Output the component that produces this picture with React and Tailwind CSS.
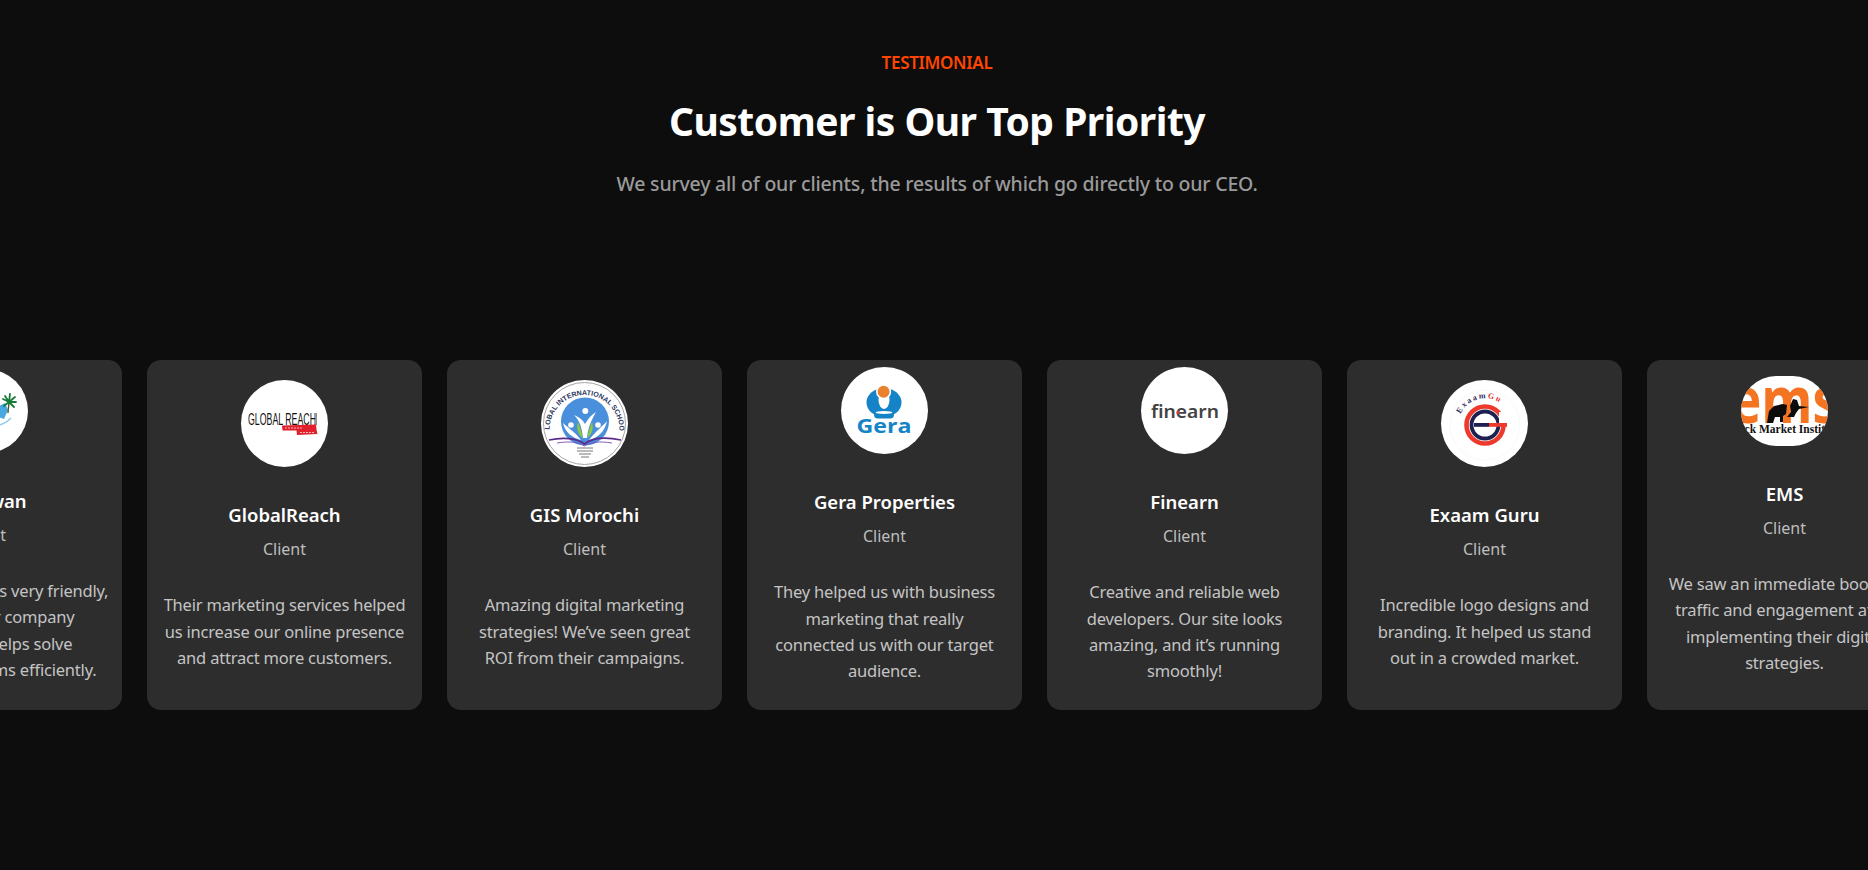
import React from 'react';

const GlobalReachLogo = () => (
  <svg viewBox="0 0 87 87" className="w-full h-full">
    <text x="7" y="45" fontFamily="Liberation Sans, sans-serif" fontSize="16" fill="#111" textLength="68" lengthAdjust="spacingAndGlyphs">GLOBAL REACH</text>
    <path d="M41 45.5 L75 44.5 L75.5 49.5 L76.5 54 L56 55 L55.5 50.5 L41.5 50.5 Z" fill="#e0202c" />
    <path d="M44 48 H62 M59 52.5 H73" stroke="#f6c9cc" strokeWidth="0.9" strokeDasharray="2 1" />
    <path d="M75.5 33 V45" stroke="#444" strokeWidth="0.6" />
  </svg>
);

const GisLogo = () => (
  <svg viewBox="0 0 87 87" className="w-full h-full">
    <circle cx="43.5" cy="43.5" r="41" fill="none" stroke="#9a9a9a" strokeWidth="0.9" />
    <defs>
      <path id="gis-arc" d="M8.5 50 A35 35 0 1 1 78.5 50" />
    </defs>
    <text fontFamily="Liberation Sans, sans-serif" fontSize="7" fontWeight="700" fill="#2a3560">
      <textPath href="#gis-arc" startOffset="50%" textAnchor="middle">GLOBAL INTERNATIONAL SCHOOL</textPath>
    </text>
    <circle cx="44" cy="41.5" r="24" fill="#4a8fdc" />
    <path d="M42 58 C41 48 39 41 33 35 C38 37 42 40 44 44 C47 39 50 35 55 32 C51 39 47 47 46 58 Z" fill="#fff" />
    <circle cx="44.3" cy="31" r="3" fill="#fff" />
    <circle cx="30" cy="45" r="2.8" fill="#fff" />
    <circle cx="57" cy="45" r="2.8" fill="#fff" />
    <path d="M22 43 C26 47 33 51 40 60 C31 58 24 52 22 43 Z M66 41 C62 46 55 51 48 60 C57 58 64 51 66 41 Z" fill="#fff" />
    <path d="M37 42 C39 47 41 52 41.5 58 C37 54 35 48 37 42 Z M51 42 C49 47 47 52 46.5 58 C51 54 53 48 51 42 Z" fill="#8cc63f" />
    <path d="M8 60 C22 57 36 58 43.5 64 C51 58 65 57 80 60" fill="none" stroke="#5b2a8c" strokeWidth="1.7" />
    <path d="M16 63 C28 61 38 62 43.5 66 C49 62 59 61 71 63" fill="none" stroke="#7a4bb0" strokeWidth="0.9" />
    <path d="M36 68 H52 M36 71 H52 M38 74 H50 M40 77 H48" stroke="#666" strokeWidth="0.9" />
  </svg>
);

const GeraLogo = () => (
  <svg viewBox="0 0 87 87" className="w-full h-full">
    <ellipse cx="43" cy="35.5" rx="17.5" ry="14.5" fill="#1583c7" />
    <ellipse cx="43" cy="33" rx="5.5" ry="9" fill="#fff" />
    <circle cx="42.6" cy="24.7" r="7.6" fill="#fff" />
    <circle cx="42.6" cy="24.7" r="6" fill="#e9822e" />
    <rect x="33" y="44" width="20" height="7.5" rx="3.7" fill="#1583c7" />
    <ellipse cx="43" cy="45.5" rx="8.5" ry="1.4" fill="#fff" />
    <text x="43" y="66" textAnchor="middle" fontFamily="Open Sans, sans-serif" fontWeight="700" fontSize="20" fill="#1583c7" textLength="55" lengthAdjust="spacingAndGlyphs">Gera</text>
  </svg>
);

const FinearnLogo = () => (
  <svg viewBox="0 0 87 87" className="w-full h-full">
    <text x="10" y="50.5" fontFamily="Noto Sans, sans-serif" fontWeight="600" fontSize="18" fill="#434345" textLength="68" lengthAdjust="spacingAndGlyphs">finearn</text>
    <circle cx="37" cy="45.5" r="1.6" fill="#e8343a" />
  </svg>
);

const ExaamLogo = () => (
  <svg viewBox="0 0 87 87" className="w-full h-full">
    <circle cx="44" cy="45" r="35" fill="none" stroke="#f4f4f4" strokeWidth="0.6" />
    <defs>
      <path id="exaam-arc" d="M19.5 34 A27 27 0 0 1 69 35" />
    </defs>
    <text fontFamily="Liberation Serif, serif" fontSize="8" fontWeight="700" letterSpacing="1.8" fill="#2c2a5c">
      <textPath href="#exaam-arc" startOffset="0">Exaam<tspan fill="#e8342a">Gu</tspan></textPath>
    </text>
    <circle cx="44" cy="45" r="18.5" fill="none" stroke="#ee3a2c" strokeWidth="4.6" />
    <circle cx="44" cy="45" r="13.5" fill="none" stroke="#1d2050" strokeWidth="3.8" />
    <rect x="58" y="32" width="10" height="11" fill="#fff" />
    <rect x="33" y="43" width="15" height="3.8" fill="#1d2050" />
    <rect x="48" y="43" width="18" height="3.8" fill="#ee3a2c" />
  </svg>
);

const EmsLogo = () => (
  <svg viewBox="0 0 87 70" className="w-full h-full">
    <text x="43.5" y="47" textAnchor="middle" fontFamily="Open Sans, sans-serif" fontWeight="700" fontSize="65" fill="#f47421" textLength="108" lengthAdjust="spacingAndGlyphs">ems</text>
    <path d="M26 47 L28 35 L33 30 L42 28 L46 29 L45 38 L42 40 L42 46 L39 46 L39 41 L34 41 L32 47 Z" fill="#0c0c0c" />
    <path d="M46 41 L50 36 L49 30 L52 23 L56 24 L58 30 L68 31 L58 33 L55 37 L53 41 Z" fill="#0c0c0c" />
    <text x="43.5" y="57" textAnchor="middle" fontFamily="Liberation Serif, serif" fontWeight="700" fontSize="11.5" fill="#111">Stock Market Institute</text>
  </svg>
);

const PalmLogo = () => (
  <svg viewBox="0 0 87 84" className="w-full h-full">
    <path d="M58 37 L64 34 L67 41 L63 50 L58 48 Z" fill="#4aa8e0" />
    <path d="M52 56 C58 57 64 55 70 49" fill="none" stroke="#8fcdf0" strokeWidth="1.6" />
    <path d="M67 44 C67 40 68 36 68 33" fill="none" stroke="#3a5a2a" strokeWidth="1.4" />
    <path d="M68 33 L62 30 M68 33 L64 27 M68 33 L69 25 M68 33 L74 28 M68 33 L75 33 M68 33 L63 37 M68 33 L73 38" stroke="#167a34" strokeWidth="1.8" strokeLinecap="round" />
    <path d="M50 26 L53 25 L55 27" fill="none" stroke="#c0504d" strokeWidth="0.8" />
  </svg>
);

const testimonials = [
  { name: 'Bhagwan', text: 'The support here is very friendly,\nand so is their company\nand it really helps solve\nall of our problems efficiently.', logo: <PalmLogo />, avatar: 'h-[84px]' },
  { name: 'GlobalReach', text: 'Their marketing services helped\nus increase our online presence\nand attract more customers.', logo: <GlobalReachLogo />, avatar: 'h-[87px]' },
  { name: 'GIS Morochi', text: 'Amazing digital marketing\nstrategies! We’ve seen great\nROI from their campaigns.', logo: <GisLogo />, avatar: 'h-[87px]' },
  { name: 'Gera Properties', text: 'They helped us with business\nmarketing that really\nconnected us with our target\naudience.', logo: <GeraLogo />, avatar: 'h-[87px]' },
  { name: 'Finearn', text: 'Creative and reliable web\ndevelopers. Our site looks\namazing, and it’s running\nsmoothly!', logo: <FinearnLogo />, avatar: 'h-[87px]' },
  { name: 'Exaam Guru', text: 'Incredible logo designs and\nbranding. It helped us stand\nout in a crowded market.', logo: <ExaamLogo />, avatar: 'h-[87px]' },
  { name: 'EMS', text: 'We saw an immediate boost in\ntraffic and engagement after\nimplementing their digital\nstrategies.', logo: <EmsLogo />, avatar: 'h-[70px]' },
];

const Card = ({ item }) => (
  <div className="w-[275px] h-[350px] shrink-0 rounded-[14px] bg-[#2d2d2d] flex flex-col items-center justify-center text-center">
    <div className={`w-[87px] ${item.avatar} rounded-full bg-white overflow-hidden shrink-0`}>{item.logo}</div>
    <h3 className="mt-[34px] text-[18.5px] leading-[27px] font-semibold text-white whitespace-nowrap">{item.name}</h3>
    <p className="mt-[9px] text-[16px] leading-[24px] text-[#bdbdbd]">Client</p>
    <p className="mt-[31px] mb-[18px] text-[16.5px] leading-[26.4px] tracking-[-0.2px] text-[#c4c4c4] whitespace-pre-line">{item.text}</p>
  </div>
);

export default function App() {
  return (
    <div className="h-[870px] bg-[#0d0d0d] overflow-hidden font-['Noto_Sans',sans-serif]">
      <div className="pt-[51px] pl-[6px] flex flex-col items-center text-center">
        <p className="text-[17px] leading-[24px] font-semibold text-[#ff4500] tracking-[-0.3px]">TESTIMONIAL</p>
        <h2 className="mt-[20px] text-[39px] leading-[52px] font-bold text-white tracking-[-0.5px]">Customer is Our Top Priority</h2>
        <p className="mt-[23px] text-[19.5px] leading-[28px] font-medium text-[#9a9a9a] tracking-[-0.2px]">We survey all of our clients, the results of which go directly to our CEO.</p>
      </div>
      <div className="mt-[162px] ml-[-153px] flex gap-[25px] w-max">
        {testimonials.map((item) => (
          <Card key={item.name} item={item} />
        ))}
      </div>
    </div>
  );
}
